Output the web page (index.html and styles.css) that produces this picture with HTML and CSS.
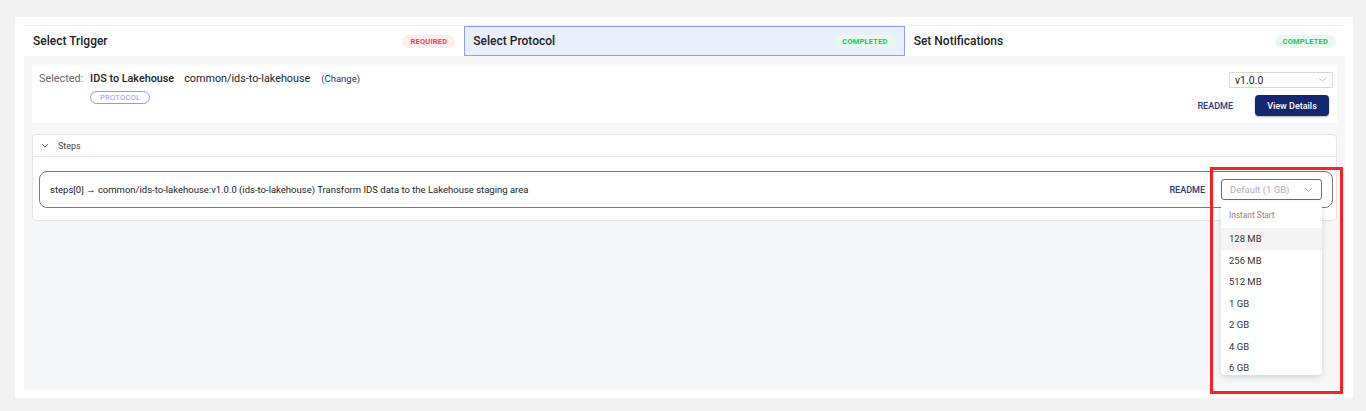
FILE: index.html
```html
<!DOCTYPE html>
<html lang="en">
<head>
    <meta charset="UTF-8">
    <meta name="viewport" content="width=device-width, initial-scale=1.0">
    <title>Pipeline setup</title>
    <link rel="stylesheet" href="styles.css">
</head>
<body>
    <div class="card">
        <div class="inner">
            <div class="tabs">
                <div class="tab">
                    <span class="tab-title">Select Trigger</span>
                    <span class="badge required">REQUIRED</span>
                </div>
                <div class="tab active">
                    <span class="tab-title">Select Protocol</span>
                    <span class="badge completed">COMPLETED</span>
                </div>
                <div class="tab">
                    <span class="tab-title">Set Notifications</span>
                    <span class="badge completed">COMPLETED</span>
                </div>
            </div>

            <div class="selected-panel">
                <div class="selected-info">
                    <div class="selected-line">
                        <span class="muted">Selected:</span>
                        <span class="proto-name">IDS to Lakehouse</span>
                        <span class="proto-slug">common/ids-to-lakehouse</span>
                        <a class="change-link">(Change)</a>
                    </div>
                    <span class="pill">PROTOCOL</span>
                </div>
                <div class="selected-actions">
                    <div class="version-select">
                        <span>v1.0.0</span>
                        <svg width="9" height="6" viewBox="0 0 9 6"><path d="M1 1l3.5 3.5L8 1" fill="none" stroke="#c4c4c4" stroke-width="1"/></svg>
                    </div>
                    <div class="action-row">
                        <a class="readme">README</a>
                        <button class="btn-primary">View Details</button>
                    </div>
                </div>
            </div>

            <div class="steps-panel">
                <div class="steps-header">
                    <svg width="8" height="5" viewBox="0 0 8 5"><path d="M1 1l3 3 3-3" fill="none" stroke="#666" stroke-width="1"/></svg>
                    <span>Steps</span>
                </div>
                <div class="steps-body">
                    <div class="step">
                        <span class="step-text">steps[0] → common/ids-to-lakehouse:v1.0.0 (ids-to-lakehouse) Transform IDS data to the Lakehouse staging area</span>
                        <a class="readme">README</a>
                        <div class="memory">
                            <div class="memory-select">
                                <span>Default (1 GB)</span>
                                <svg width="9" height="6" viewBox="0 0 9 6"><path d="M1 1l3.5 3.5L8 1" fill="none" stroke="#b8b8b8" stroke-width="1"/></svg>
                            </div>
                            <div class="memory-menu">
                                <div class="group-label">Instant Start</div>
                                <div class="option hover">128 MB</div>
                                <div class="option">256 MB</div>
                                <div class="option">512 MB</div>
                                <div class="option">1 GB</div>
                                <div class="option">2 GB</div>
                                <div class="option">4 GB</div>
                                <div class="option">6 GB</div>
                            </div>
                            <div class="highlight"></div>
                        </div>
                    </div>
                </div>
            </div>
        </div>
    </div>
</body>
</html>
```

FILE: styles.css
```css
body {
    margin: 0;
    padding: 17px 13px 13px 15px;
    background: #f2f2f2;
    font-family: Roboto, "Liberation Sans", Arial, sans-serif;
    color: #222;
}
a {
    cursor: pointer;
}
.card {
    background: #fff;
    padding: 8px 8px 8px 9px;
}
.inner {
    background: #f6f7f9;
    height: 365px;
    display: flex;
    flex-direction: column;
}
.tabs {
    display: flex;
    height: 31px;
    background: #fff;
    border-top: 1px solid #f0f0f0;
    box-sizing: border-box;
}
.tab {
    flex: 1;
    display: flex;
    align-items: center;
    justify-content: space-between;
    padding: 0 8px 0 8px;
    border: 1px solid transparent;
}
.tab.active {
    background: #e9effd;
    border-color: #8e9ff6;
}
.tab-title {
    font-size: 12px;
    font-weight: 500;
    color: #222;
}
.badge {
    font-size: 7.5px;
    font-weight: 700;
    padding: 2px 8px;
    border-radius: 8px;
    letter-spacing: 0.2px;
}
.badge.required {
    background: #fdeeee;
    color: #f2404f;
}
.badge.completed {
    background: #e8f8ee;
    color: #26c25c;
}
.selected-panel {
    margin: 9px 8px 0;
    background: #fff;
    height: 58px;
    display: flex;
    justify-content: space-between;
    padding: 6px 4px 0 7px;
    box-sizing: border-box;
}
.selected-line {
    display: flex;
    align-items: baseline;
    font-size: 10.8px;
    margin-top: 1px;
}
.muted {
    color: #666;
    margin-right: 7px;
}
.proto-name {
    font-weight: 500;
    color: #222;
    margin-right: 10px;
}
.proto-slug {
    color: #222;
    margin-right: 11px;
}
.change-link {
    color: #1f3374;
    font-size: 9.5px;
}
.pill {
    display: inline-block;
    margin: 4px 0 0 51px;
    font-size: 7.5px;
    color: #8a9cf2;
    border: 1px solid #8a9cf2;
    border-radius: 8px;
    padding: 1px 9px;
    letter-spacing: 0.3px;
}
.selected-actions {
    display: flex;
    flex-direction: column;
    align-items: flex-end;
}
.version-select {
    width: 104px;
    height: 16px;
    box-sizing: border-box;
    border: 1px solid #d6d6d6;
    border-radius: 2px;
    display: flex;
    align-items: center;
    justify-content: space-between;
    padding: 0 5px 0 5px;
    font-size: 10.5px;
    margin-top: 1px;
}
.action-row {
    display: flex;
    align-items: center;
    margin-top: 7px;
    margin-right: 4px;
}
.readme {
    font-size: 9px;
    color: #25397a;
    font-weight: 500;
}
.btn-primary {
    margin-left: 22px;
    background: #132670;
    color: #fff;
    border: 0;
    border-radius: 4px;
    font-family: inherit;
    font-size: 9px;
    font-weight: 500;
    width: 74px;
    height: 21px;
    box-shadow: 0 1px 2px rgba(0,0,0,0.3);
}
.steps-panel {
    margin: 11px 8px 0;
    background: #fff;
    border: 1px solid #e4e4e4;
    border-radius: 4px;
}
.steps-header {
    height: 21px;
    border-bottom: 1px solid #e4e4e4;
    display: flex;
    align-items: center;
    padding-left: 8px;
    font-size: 9px;
    color: #444;
}
.steps-header svg {
    margin-right: 9px;
}
.steps-body {
    padding: 14px 3px 12px 6px;
}
.step {
    height: 37px;
    box-sizing: border-box;
    border: 1px solid #7a7a7a;
    border-radius: 8px;
    display: flex;
    align-items: center;
    padding: 0 10px 0 10px;
}
.step-text {
    flex: 1;
    font-size: 9.5px;
    color: #222;
}
.memory {
    position: relative;
    margin-left: 16px;
}
.memory-select {
    width: 101px;
    height: 21px;
    box-sizing: border-box;
    border: 1px solid #5a6a9c;
    border-radius: 3px;
    display: flex;
    align-items: center;
    justify-content: space-between;
    padding: 0 8px 0 8px;
    font-size: 9.5px;
    color: #b0b0b0;
}
.memory-menu {
    position: absolute;
    top: 23px;
    left: 0;
    width: 101px;
    height: 173px;
    overflow: hidden;
    background: #fff;
    border-radius: 4px;
    box-shadow: 0 2px 6px rgba(0,0,0,0.15);
    padding-top: 4px;
    box-sizing: border-box;
    z-index: 2;
}
.group-label {
    font-size: 8.3px;
    color: #888;
    padding: 4px 8px 8px;
}
.option {
    font-size: 9.5px;
    color: #333;
    height: 21.5px;
    line-height: 21.5px;
    padding: 0 8px;
}
.option.hover {
    background: #f4f4f4;
}
.highlight {
    position: absolute;
    top: -12px;
    left: -11px;
    width: 133px;
    height: 227px;
    box-sizing: border-box;
    border: 3px solid #ff1f1f;
    z-index: 3;
}
```
